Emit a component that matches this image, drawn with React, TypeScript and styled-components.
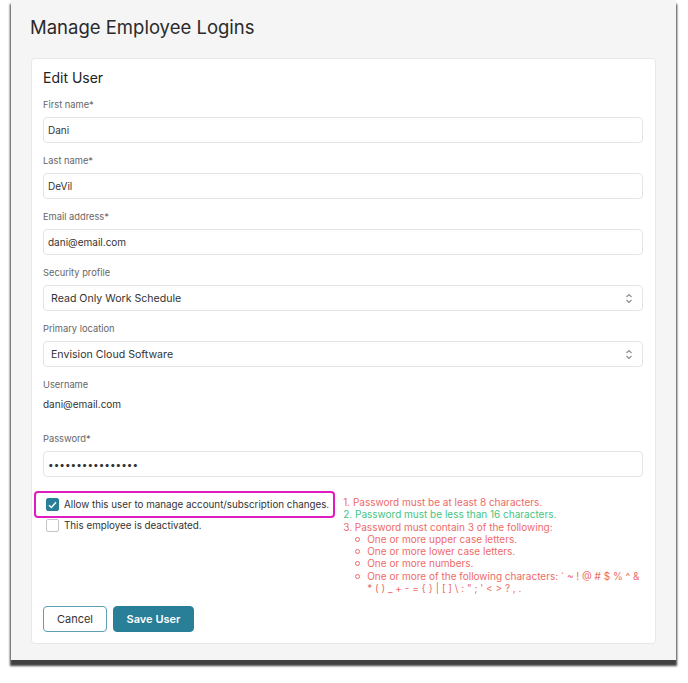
import React from "react";
import styled, { createGlobalStyle } from "styled-components";

const GlobalStyle = createGlobalStyle`
  html, body {
    margin: 0;
    padding: 0;
    background: #fff;
  }
  body {
    font-family: Inter, "Noto Sans", sans-serif;
    color: #333;
  }
  * {
    box-sizing: border-box;
  }
`;

const Window = styled.div`
  margin: 0 0 12px 11px;
  width: 665px;
  height: 660px;
  background: #f5f5f5;
  box-shadow: 0 5px 2px 1px rgba(0, 0, 0, 0.75);
  padding: 15px 20px 17px;
  display: flex;
  flex-direction: column;
`;

const PageTitle = styled.h1`
  margin: 0 0 19px -1px;
  font-size: 18.5px;
  line-height: 24px;
  font-weight: 400;
  color: #2a2a2a;
`;

const Card = styled.div`
  background: #fff;
  border: 1px solid #e8e8e8;
  border-radius: 4px;
  padding: 9px 12px 11px 11px;
  display: flex;
  flex-direction: column;
`;

const CardTitle = styled.h2`
  margin: 0 0 10px;
  font-size: 14px;
  line-height: 20px;
  font-weight: 400;
  color: #222;
`;

const Field = styled.div`
  display: flex;
  flex-direction: column;
  margin-bottom: 11px;
`;

const Label = styled.label`
  font-size: 9.3px;
  line-height: 14px;
  color: #666;
  margin-bottom: 5px;
`;

const TextInput = styled.input`
  height: 26px;
  width: 100%;
  border: 1px solid #e4e4e4;
  border-radius: 4px;
  padding: 0 4px;
  font-family: inherit;
  font-size: 10px;
  color: #333;
  outline: none;
  background: #fff;
`;

const SelectBox = styled.div`
  height: 26px;
  border: 1px solid #e4e4e4;
  border-radius: 4px;
  padding: 0 9px 0 7px;
  display: flex;
  align-items: center;
  justify-content: space-between;
  font-size: 10.6px;
  color: #333;
`;

const StaticValue = styled.div`
  height: 24px;
  font-size: 10px;
  line-height: 14px;
  color: #333;
`;

const OptionsRow = styled.div`
  display: flex;
  gap: 8px;
  margin-top: 3px;
`;

const CheckColumn = styled.div`
  display: flex;
  flex-direction: column;
  margin-left: -9px;
`;

const CheckRow = styled.label<{ $highlight?: boolean }>`
  display: flex;
  align-items: center;
  gap: 5px;
  font-size: 9.8px;
  color: #333;
  white-space: nowrap;
  ${(p) =>
    p.$highlight
      ? `
    height: 27px;
    border: 2px solid #e01cc0;
    border-radius: 4px;
    padding: 0 4px 0 10px;
  `
      : `
    height: 14px;
    padding-left: 12px;
  `}
`;

const Box = styled.span<{ $checked?: boolean }>`
  width: 13px;
  height: 13px;
  border-radius: 2px;
  flex: none;
  display: flex;
  align-items: center;
  justify-content: center;
  background: ${(p) => (p.$checked ? "#2a7f98" : "#fff")};
  border: 1px solid ${(p) => (p.$checked ? "#2a7f98" : "#c4c4c4")};
`;

const Rules = styled.div`
  margin-top: 5px;
  font-size: 10px;
  line-height: 12.3px;
  white-space: nowrap;
`;

const Rule = styled.div<{ $ok?: boolean }>`
  color: ${(p) => (p.$ok ? "#45c482" : "#ee6b68")};
`;

const SubRule = styled.div`
  position: relative;
  padding-left: 24px;
  color: #ee6b68;
  &::before {
    content: "";
    position: absolute;
    left: 12px;
    top: 4px;
    width: 3px;
    height: 3px;
    border: 1px solid #ee6b68;
    border-radius: 50%;
  }
`;

const Actions = styled.div`
  display: flex;
  gap: 6px;
  margin-top: 12px;
`;

const Button = styled.button<{ $primary?: boolean }>`
  height: 26px;
  border-radius: 4px;
  font-family: inherit;
  font-size: 11px;
  padding: 0;
  white-space: nowrap;
  cursor: pointer;
  ${(p) =>
    p.$primary
      ? `
    background: #2a7f98;
    border: 1px solid #2a7f98;
    color: #fff;
    font-weight: 600;
    width: 81px;
  `
      : `
    background: #fff;
    border: 1px solid #5d9fb4;
    color: #333;
    width: 64px;
  `}
`;

function Chevrons() {
  return (
    <svg width="8" height="11" viewBox="0 0 8 11" fill="none">
      <path d="M1.5 4 L4 1.5 L6.5 4" stroke="#8a8a8a" strokeWidth="1.1" />
      <path d="M1.5 7 L4 9.5 L6.5 7" stroke="#8a8a8a" strokeWidth="1.1" />
    </svg>
  );
}

function Check() {
  return (
    <svg width="9" height="8" viewBox="0 0 9 8" fill="none">
      <path d="M1 4.2 L3.4 6.5 L8 1.3" stroke="#fff" strokeWidth="1.4" />
    </svg>
  );
}

export default function App() {
  return (
    <>
      <GlobalStyle />
      <Window>
        <PageTitle>Manage Employee Logins</PageTitle>
        <Card>
          <CardTitle>Edit User</CardTitle>
          <Field>
            <Label>First name*</Label>
            <TextInput defaultValue="Dani" readOnly />
          </Field>
          <Field>
            <Label>Last name*</Label>
            <TextInput defaultValue="DeVil" readOnly />
          </Field>
          <Field>
            <Label>Email address*</Label>
            <TextInput defaultValue="dani@email.com" readOnly />
          </Field>
          <Field>
            <Label>Security profile</Label>
            <SelectBox>
              <span>Read Only Work Schedule</span>
              <Chevrons />
            </SelectBox>
          </Field>
          <Field>
            <Label>Primary location</Label>
            <SelectBox>
              <span>Envision Cloud Software</span>
              <Chevrons />
            </SelectBox>
          </Field>
          <Field>
            <Label>Username</Label>
            <StaticValue>dani@email.com</StaticValue>
          </Field>
          <Field>
            <Label>Password*</Label>
            <TextInput type="password" defaultValue="passwordpassword" readOnly />
          </Field>
          <OptionsRow>
            <CheckColumn>
              <CheckRow $highlight>
                <Box $checked>
                  <Check />
                </Box>
                Allow this user to manage account/subscription changes.
              </CheckRow>
              <CheckRow>
                <Box />
                This employee is deactivated.
              </CheckRow>
            </CheckColumn>
            <Rules>
              <Rule>1. Password must be at least 8 characters.</Rule>
              <Rule $ok>2. Password must be less than 16 characters.</Rule>
              <Rule>3. Password must contain 3 of the following:</Rule>
              <SubRule>One or more upper case letters.</SubRule>
              <SubRule>One or more lower case letters.</SubRule>
              <SubRule>One or more numbers.</SubRule>
              <SubRule>
                One or more of the following characters: ` ~ ! @ # $ % ^ &amp;
                <br />* ( ) _ + - = {"{"} {"}"} | [ ] \ : " ; ' &lt; &gt; ? , .
              </SubRule>
            </Rules>
          </OptionsRow>
          <Actions>
            <Button>Cancel</Button>
            <Button $primary>Save User</Button>
          </Actions>
        </Card>
      </Window>
    </>
  );
}
